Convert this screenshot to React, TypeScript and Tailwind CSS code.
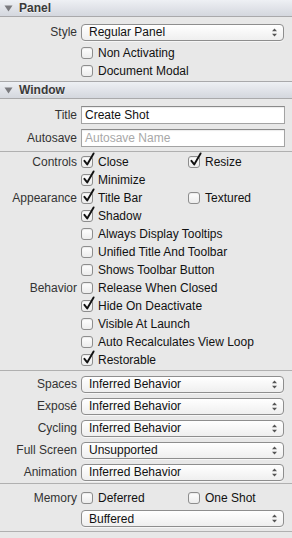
import React from "react";

const font = { fontFamily: '"Liberation Sans", Arial, sans-serif' };

function Header({ title, top }: { title: string; top?: boolean }) {
  return (
    <div
      className={`flex items-center h-[17px] border-b border-[#a9a9ab] bg-gradient-to-b from-[#eef0f4] to-[#d4d7de] ${top ? "" : "border-t border-t-[#a9a9ab] h-[18px]"}`}
    >
      <svg width="9" height="7" viewBox="0 0 9 7" className="ml-[4px] mr-[6px]">
        <path d="M0.5 0.5 L8.5 0.5 L4.5 6.5 Z" fill="#7a7a7e" />
      </svg>
      <span className="text-[12px] font-bold text-[#3a3a3a] leading-none [text-shadow:0_1px_0_rgba(255,255,255,0.7)]">
        {title}
      </span>
    </div>
  );
}

function Sep() {
  return <div className="h-px bg-[#b0b0b0]" />;
}

function Label({ text }: { text?: string }) {
  return (
    <div className="w-[78px] shrink-0 text-right pr-[1px] text-[12px] text-[#333] whitespace-nowrap">
      {text ?? ""}
    </div>
  );
}

function Box({ checked }: { checked?: boolean }) {
  return (
    <div className="relative w-[12px] h-[12px] shrink-0 rounded-[3px] border border-[#8d8d8d] bg-gradient-to-b from-[#ffffff] to-[#ececec] shadow-[inset_0_1px_1px_rgba(0,0,0,0.08)]">
      {checked && (
        <svg
          width="14"
          height="15"
          viewBox="0 0 14 15"
          className="absolute left-[0px] top-[-5px]"
        >
          <path
            d="M2.4 8.8 L5.2 12.4 L11.6 1.4"
            fill="none"
            stroke="#111"
            strokeWidth="1.9"
            strokeLinecap="round"
            strokeLinejoin="round"
          />
        </svg>
      )}
    </div>
  );
}

function Check({ text, checked }: { text: string; checked?: boolean }) {
  return (
    <div className="flex items-center gap-[5px] whitespace-nowrap">
      <Box checked={checked} />
      <span className="text-[12px] text-[#111] leading-none">{text}</span>
    </div>
  );
}

function CheckRow({
  label,
  a,
  b,
}: {
  label?: string;
  a: [string, boolean];
  b?: [string, boolean];
}) {
  return (
    <div className="flex items-center h-[18px]">
      <Label text={label} />
      <div className={`ml-[3px] shrink-0 ${b ? "w-[107px]" : ""}`}>
        <Check text={a[0]} checked={a[1]} />
      </div>
      {b && <Check text={b[0]} checked={b[1]} />}
    </div>
  );
}

function Popup({ text }: { text: string }) {
  return (
    <div className="flex items-center h-[17px] w-[203px] rounded-[4px] border border-[#8e8e8e] bg-gradient-to-b from-[#ffffff] to-[#efefef] shadow-[0_1px_0_rgba(255,255,255,0.6)] pl-[7px] pr-[6px]">
      <span className="flex-1 text-[12px] text-[#111] leading-none whitespace-nowrap">{text}</span>
      <svg width="5" height="9" viewBox="0 0 5 9">
        <path d="M0 3.2 L2.5 0.4 L5 3.2 Z" fill="#555" />
        <path d="M0 5.8 L2.5 8.6 L5 5.8 Z" fill="#555" />
      </svg>
    </div>
  );
}

function PopupRow({ label, text }: { label?: string; text: string }) {
  return (
    <div className="flex items-center h-[22px]">
      <Label text={label} />
      <div className="ml-[3px]">
        <Popup text={text} />
      </div>
    </div>
  );
}

function Field({ text, placeholder }: { text: string; placeholder?: boolean }) {
  return (
    <div className="flex items-center h-[18px] w-[204px] border border-[#a3a3a3] border-t-[#8a8a8a] bg-white pl-[3px] shadow-[inset_0_1px_1px_rgba(0,0,0,0.08)]">
      <span
        className={`text-[12px] leading-none whitespace-nowrap ${placeholder ? "text-[#a8a8a8]" : "text-[#111]"}`}
      >
        {text}
      </span>
    </div>
  );
}

export default function App() {
  return (
    <div className="w-[292px] h-[538px] bg-[#e8e8e8] overflow-hidden" style={font}>
      <Header title="Panel" top />
      <div className="pt-[4px] pb-[1px]">
        <PopupRow label="Style" text="Regular Panel" />
        <div className="h-[1px]" />
        <CheckRow a={["Non Activating", false]} />
        <CheckRow a={["Document Modal", false]} />
      </div>
      <Header title="Window" />
      <div className="pt-[7px] pb-[4px] flex flex-col gap-[5px]">
        <div className="flex items-center">
          <Label text="Title" />
          <div className="ml-[3px]">
            <Field text="Create Shot" />
          </div>
        </div>
        <div className="flex items-center">
          <Label text="Autosave" />
          <div className="ml-[3px]">
            <Field text="Autosave Name" placeholder />
          </div>
        </div>
      </div>
      <Sep />
      <div className="pt-[1px] pb-[1px]">
        <CheckRow label="Controls" a={["Close", true]} b={["Resize", true]} />
        <CheckRow a={["Minimize", true]} />
        <CheckRow label="Appearance" a={["Title Bar", true]} b={["Textured", false]} />
        <CheckRow a={["Shadow", true]} />
        <CheckRow a={["Always Display Tooltips", false]} />
        <CheckRow a={["Unified Title And Toolbar", false]} />
        <CheckRow a={["Shows Toolbar Button", false]} />
        <CheckRow label="Behavior" a={["Release When Closed", false]} />
        <CheckRow a={["Hide On Deactivate", true]} />
        <CheckRow a={["Visible At Launch", false]} />
        <CheckRow a={["Auto Recalculates View Loop", false]} />
        <CheckRow a={["Restorable", true]} />
      </div>
      <Sep />
      <div className="pt-[2px] pb-[0px]">
        <PopupRow label="Spaces" text="Inferred Behavior" />
        <PopupRow label="Exposé" text="Inferred Behavior" />
        <PopupRow label="Cycling" text="Inferred Behavior" />
        <PopupRow label="Full Screen" text="Unsupported" />
        <PopupRow label="Animation" text="Inferred Behavior" />
      </div>
      <Sep />
      <div className="pt-[5px] pb-[4px]">
        <CheckRow label="Memory" a={["Deferred", false]} b={["One Shot", false]} />
        <div className="flex items-center mt-[3px]">
          <Label />
          <div className="ml-[3px]">
            <Popup text="Buffered" />
          </div>
        </div>
      </div>
      <Sep />
    </div>
  );
}
